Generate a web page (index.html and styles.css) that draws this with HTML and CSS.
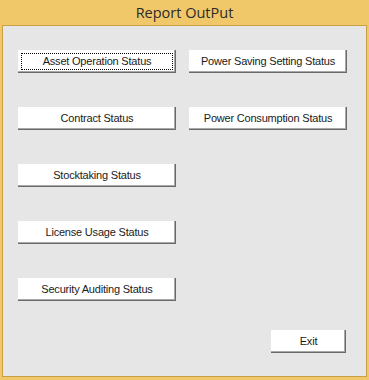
FILE: index.html
```html
<!DOCTYPE html>
<html>
<head>
<meta charset="utf-8">
<link rel="stylesheet" href="styles.css">
</head>
<body>
<div class="window">
  <div class="titlebar">Report OutPut</div>
  <div class="client">
    <div class="grid">
      <button class="btn focused">Asset Operation Status</button>
      <button class="btn">Power Saving Setting Status</button>
      <button class="btn">Contract Status</button>
      <button class="btn">Power Consumption Status</button>
      <button class="btn col1">Stocktaking Status</button>
      <button class="btn col1">License Usage Status</button>
      <button class="btn col1">Security Auditing Status</button>
    </div>
    <div class="footer">
      <button class="btn exit">Exit</button>
    </div>
  </div>
</div>
</body>
</html>
```
FILE: styles.css
```css
html, body {
  margin: 0;
  padding: 0;
}
.window {
  width: 369px;
  height: 380px;
  background: #f0c86a;
  display: flex;
  flex-direction: column;
  box-sizing: border-box;
}
.titlebar {
  height: 25px;
  display: flex;
  align-items: center;
  justify-content: center;
  font-family: "Open Sans", "Noto Sans", sans-serif;
  font-size: 14.5px;
  color: #2b2b2b;
  padding-bottom: 1px;
  box-sizing: border-box;
}
.client {
  margin: 0 2px 3px 2px;
  flex: 1;
  border: 1px solid #c9a04a;
  background: #e6e6e6;
  display: flex;
  flex-direction: column;
}
.grid {
  display: grid;
  grid-template-columns: 158px 158px;
  grid-auto-rows: 23px;
  column-gap: 13px;
  row-gap: 34px;
  padding: 24px 0 0 15px;
}
.col1 {
  grid-column: 1;
}
.btn {
  position: relative;
  width: 158px;
  height: 23px;
  margin: 0;
  padding: 0 0 1px 0;
  border: none;
  background: #ffffff;
  box-shadow: inset -1px -1px 0 #6a6a6a, inset -2px -2px 0 #a8a8a8;
  font-family: "Liberation Sans", Arial, sans-serif;
  font-size: 11px;
  letter-spacing: -0.2px;
  color: #1a1a1a;
  text-align: center;
}
.focused::after {
  content: "";
  position: absolute;
  left: 3px;
  top: 3px;
  right: 3px;
  bottom: 3px;
  border: 1px dotted #000;
}
.footer {
  display: flex;
  justify-content: flex-end;
  padding-right: 20px;
  margin-top: 29px;
}
.exit {
  width: 75px;
}
```
